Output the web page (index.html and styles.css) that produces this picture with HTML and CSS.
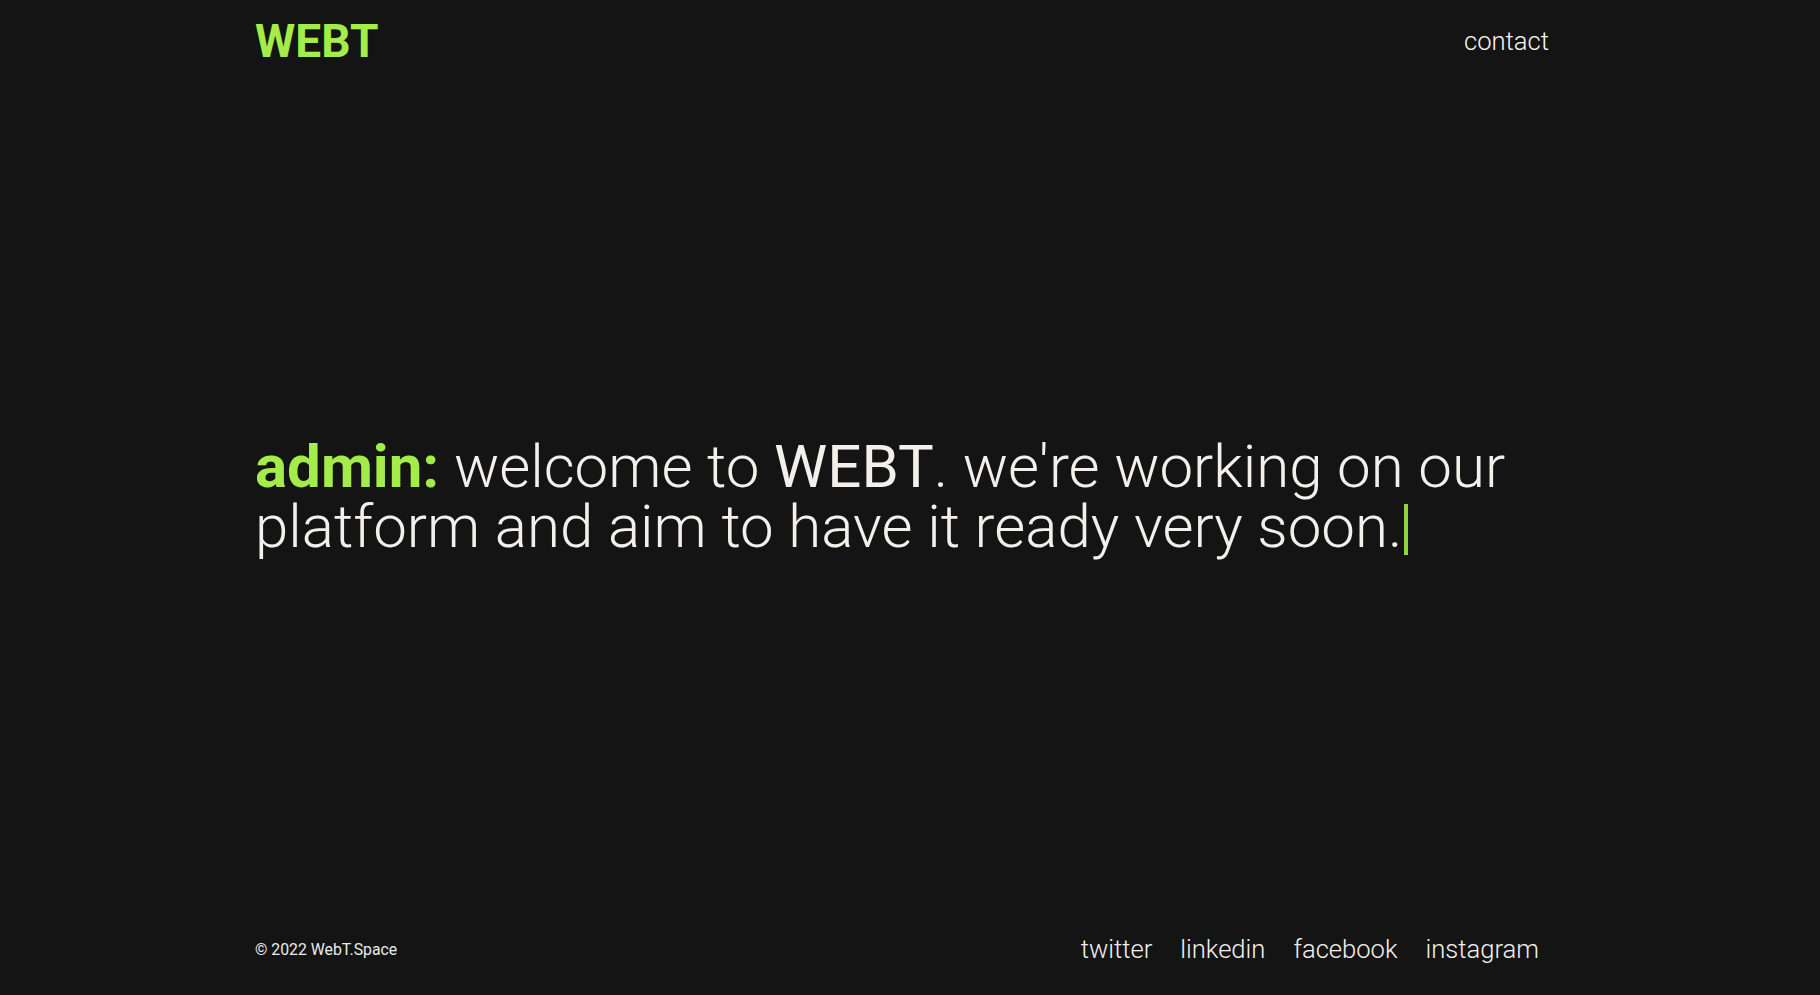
FILE: index.html
```html
<!DOCTYPE html>
<html lang="en">
<head>
<meta charset="utf-8">
<title>WEBT</title>
<link rel="stylesheet" href="styles.css">
</head>
<body>
<div class="page">
  <header class="header">
    <a class="logo" href="#">WEBT</a>
    <a class="contact" href="#">contact</a>
  </header>
  <main class="main">
    <h1 class="message"><span class="who">admin:</span> welcome to <span class="brand">WEBT</span>. we're working on our platform and aim to have it ready very soon.<span class="cursor"></span></h1>
  </main>
  <footer class="footer">
    <p class="copy">© 2022 WebT.Space</p>
    <nav class="social">
      <a href="#">twitter</a>
      <a href="#">linkedin</a>
      <a href="#">facebook</a>
      <a href="#">instagram</a>
    </nav>
  </footer>
</div>
</body>
</html>
```
FILE: styles.css
```css
* { box-sizing: border-box; }
html, body { margin: 0; padding: 0; }
body {
  background: #141414;
  color: #f3f0ec;
  font-family: Roboto, "Noto Sans", sans-serif;
}
a { color: inherit; text-decoration: none; }
.page {
  min-height: 100vh;
  display: flex;
  flex-direction: column;
  padding: 0 271px 0 255px;
}
.header {
  display: flex;
  justify-content: space-between;
  align-items: center;
  padding-top: 18px;
}
.logo {
  font-size: 46px;
  line-height: 1;
  font-weight: 700;
  color: #a3ec4a;
}
.contact {
  font-size: 25.6px;
  line-height: 1;
  font-weight: 300;
  color: #f6f4f0;
  padding-top: 2px;
}
.main {
  flex: 1;
  display: flex;
  align-items: center;
  padding-bottom: 8px;
}
.message {
  margin: 0;
  font-size: 60px;
  line-height: 60px;
  font-weight: 300;
  color: #f3f0ec;
}
.who { font-weight: 700; color: #a3ec4a; }
.brand { font-weight: 400; }
.cursor {
  display: inline-block;
  width: 4px;
  height: 51px;
  margin-left: 2px;
  background: #8fd63c;
  vertical-align: -8px;
}
.footer {
  display: flex;
  justify-content: space-between;
  align-items: center;
  padding-bottom: 32px;
}
.copy {
  margin: 0;
  font-size: 15.8px;
  line-height: 1;
  color: #ecebe8;
}
.social {
  display: flex;
  gap: 28px;
  margin-right: 10px;
}
.social a {
  font-size: 25.6px;
  line-height: 1;
  font-weight: 300;
  color: #f3f0ec;
}
```
